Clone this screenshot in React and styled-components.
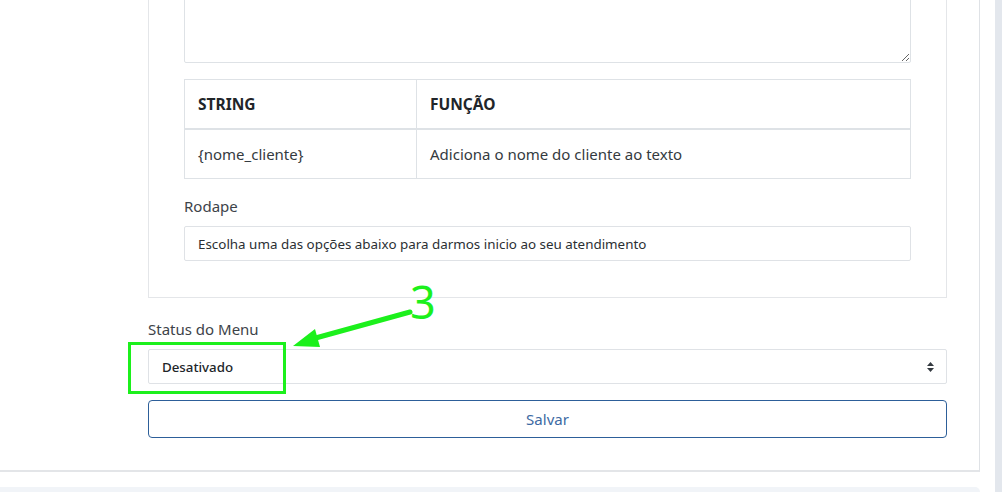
import React from "react";
import styled, { createGlobalStyle } from "styled-components";

const Global = createGlobalStyle`
  html, body { margin: 0; padding: 0; background: #fff; }
  body { font-family: "Noto Sans", "Open Sans", sans-serif; color: #212529; }
  * { box-sizing: border-box; }
`;

const Page = styled.div`
  position: relative;
  width: 1002px;
  height: 492px;
  overflow: hidden;
  display: flex;
  background: #fff;
`;

const Main = styled.div`
  width: 995px;
  display: flex;
  flex-direction: column;
`;

const SideStrip = styled.div`
  width: 7px;
  background: #e3e7ed;
`;

const OuterCard = styled.div`
  width: 980px;
  margin-top: -59px;
  padding: 0 32px 32px 148px;
  border-right: 1px solid #dfe2e6;
  border-bottom: 2px solid #e3e5e8;
  background: #fff;
`;

const BottomStrip = styled.div`
  width: 980px;
  height: 20px;
  margin-top: 15px;
  background: #f1f4f8;
  border-top-right-radius: 6px;
`;

const InnerCard = styled.div`
  border: 1px solid #e4e6e9;
  border-top: none;
  padding: 0 35px 36px 35px;
`;

const TextArea = styled.textarea`
  display: block;
  width: 100%;
  height: 122px;
  border: 1px solid #dee2e6;
  border-radius: 2px;
  resize: vertical;
  font-family: inherit;
`;

const Table = styled.table`
  width: 100%;
  margin-top: 16px;
  border-collapse: collapse;
  font-family: "Noto Sans", sans-serif;
  font-size: 15px;
  color: #212529;
`;

const Th = styled.th`
  text-align: left;
  font-weight: 700;
  font-size: 15.5px;
  height: 49px;
  padding: 0 13px;
  border: 1px solid #dee2e6;
  border-bottom: 2px solid #dee2e6;
  width: ${(p) => p.$w || "auto"};
`;

const Td = styled.td`
  height: 50px;
  padding: 0 13px;
  border: 1px solid #dee2e6;
  color: #343a40;
`;

const Label = styled.div`
  font-size: 15px;
  color: #3d4349;
  line-height: 20px;
  margin-top: ${(p) => p.$mt || 0}px;
  margin-bottom: ${(p) => p.$mb || 9}px;
`;

const Input = styled.div`
  height: 35px;
  border: 1px solid #dfe2e6;
  border-radius: 2px;
  display: flex;
  align-items: center;
  padding: 0 13px;
  font-size: 13.4px;
  color: #2b2f33;
`;

const Select = styled.div`
  height: 35px;
  border: 1px solid #dfe2e6;
  border-radius: 2px;
  display: flex;
  align-items: center;
  justify-content: space-between;
  padding: 0 11px 0 13px;
  font-size: 13.3px;
  font-weight: 500;
  color: #212529;
`;

const Button = styled.button`
  display: block;
  width: 100%;
  height: 38px;
  margin-top: 16px;
  background: #fff;
  border: 1px solid #2d5f99;
  border-radius: 4px;
  color: #3d6aa3;
  font-family: "Noto Sans", sans-serif;
  font-size: 15px;
`;

const Overlay = styled.svg`
  position: absolute;
  left: 0;
  top: 0;
  pointer-events: none;
`;

const Three = styled.div`
  position: absolute;
  left: 410px;
  top: 277px;
  font-family: "Noto Sans", sans-serif;
  font-size: 45px;
  line-height: 50px;
  color: #1cf01c;
`;

function Arrows() {
  return (
    <svg width="9" height="12" viewBox="0 0 9 12">
      <path d="M4.5 1 L8 5 H1 Z" fill="#343a40" />
      <path d="M4.5 11 L8 7 H1 Z" fill="#343a40" />
    </svg>
  );
}

export default function App() {
  return (
    <>
      <Global />
      <Page>
        <Main>
          <OuterCard>
            <InnerCard>
              <TextArea readOnly />
              <Table>
                <thead>
                  <tr>
                    <Th $w="232px">STRING</Th>
                    <Th>FUNÇÃO</Th>
                  </tr>
                </thead>
                <tbody>
                  <tr>
                    <Td>{"{nome_cliente}"}</Td>
                    <Td>Adiciona o nome do cliente ao texto</Td>
                  </tr>
                </tbody>
              </Table>
              <Label $mt={17} $mb={10}>Rodape</Label>
              <Input>Escolha uma das opções abaixo para darmos inicio ao seu atendimento</Input>
            </InnerCard>
            <Label $mt={21} $mb={10}>Status do Menu</Label>
            <Select>
              <span>Desativado</span>
              <Arrows />
            </Select>
            <Button>Salvar</Button>
          </OuterCard>
          <BottomStrip />
        </Main>
        <SideStrip />
        <Overlay width="1002" height="492">
          <rect x="129.5" y="343.5" width="155" height="49" fill="none" stroke="#1cf01c" strokeWidth="3" />
          <line x1="410" y1="312" x2="312" y2="339" stroke="#1cf01c" strokeWidth="5" strokeLinecap="round" />
          <path d="M293 346 L315 329 L320 347 Z" fill="#1cf01c" />
        </Overlay>
        <Three>3</Three>
      </Page>
    </>
  );
}
